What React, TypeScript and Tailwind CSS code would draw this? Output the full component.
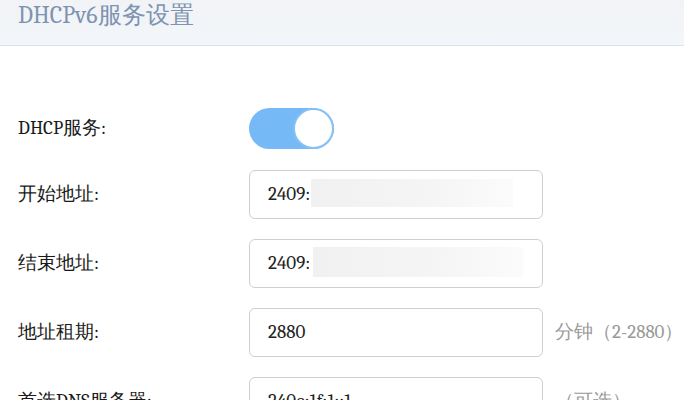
import React from 'react';

const Redacted: React.FC<{ left: number; width: number; top: number; height: number }> = ({ left, width, top, height }) => (
  <div
    className="absolute bg-gradient-to-r from-[#f1f1f1] via-[#f4f4f4] to-[#fbfbfb]"
    style={{ left, width, top, height }}
  />
);

const Field: React.FC<{ value: string; children?: React.ReactNode }> = ({ value, children }) => (
  <div className="relative w-[294px] h-[49px] rounded-[6px] border border-[#cfcfcf] bg-white flex items-center pl-[18px] text-[19px] text-[#222]">
    <span>{value}</span>
    {children}
  </div>
);

const Row: React.FC<{ label: string; hint?: string; children: React.ReactNode }> = ({ label, hint, children }) => (
  <div className="flex items-center">
    <div className="w-[249px] pl-[18px] text-[19px] text-[#1a1a1a]">{label}</div>
    {children}
    {hint && <div className="ml-[12px] text-[19px] text-[#999]">{hint}</div>}
  </div>
);

export default function App() {
  return (
    <div className="w-[684px] h-[400px] overflow-hidden bg-white font-serif [font-family:'Times_New_Roman','Liberation_Serif',Tinos,'Noto_Sans_CJK_SC',serif]">
      {/* Header */}
      <div className="h-[46px] bg-gradient-to-b from-[#f1f3f6] to-[#f3f6fa] border-b border-[#dde3e9] flex items-start pl-[18px]">
        <h2 className="text-[24px] leading-[32px] text-[#7e93b1] -mt-[1px]">DHCPv6服务设置</h2>
      </div>

      <div className="flex flex-col gap-[20px] pt-[62px]">
        <div className="flex items-center mb-[1px]">
          <div className="w-[249px] pl-[18px] text-[19px] text-[#1a1a1a]">DHCP服务:</div>
          <div className="relative w-[85px] h-[41px] rounded-full bg-[#75b9f6]">
            <div className="absolute right-0 top-0 w-[41px] h-[41px] rounded-full bg-white border-2 border-[#86c1f5]" />
          </div>
        </div>

        <Row label="开始地址:">
          <Field value="2409:">
            <Redacted left={61} width={202} top={8} height={28} />
          </Field>
        </Row>

        <Row label="结束地址:">
          <Field value="2409:">
            <Redacted left={63} width={210} top={7} height={30} />
          </Field>
        </Row>

        <Row label="地址租期:" hint="分钟（2-2880）">
          <Field value="2880" />
        </Row>

        <Row label="首选DNS服务器:" hint="（可选）">
          <Field value="240e:1f:1::1" />
        </Row>
      </div>
    </div>
  );
}
